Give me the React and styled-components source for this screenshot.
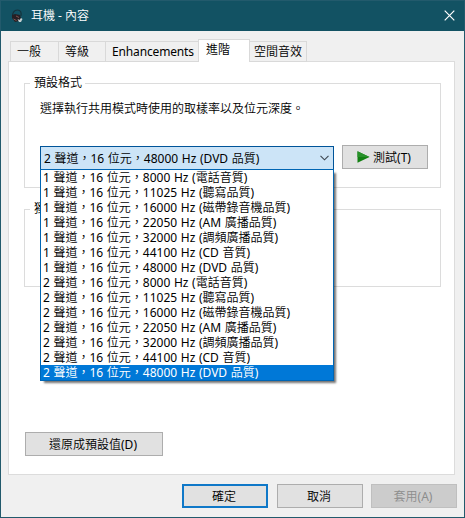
import React from "react";
import styled, { createGlobalStyle } from "styled-components";

const tabs = [
  { label: "一般", width: 48 },
  { label: "等級", width: 47 },
  { label: "Enhancements", width: 93, spacing: -0.15 },
  { label: "進階", width: 52, active: true },
  { label: "空間音效", width: 57 },
];

const formats = [
  "1 聲道，16 位元，8000 Hz (電話音質)",
  "1 聲道，16 位元，11025 Hz (聽寫品質)",
  "1 聲道，16 位元，16000 Hz (磁帶錄音機品質)",
  "1 聲道，16 位元，22050 Hz (AM 廣播品質)",
  "1 聲道，16 位元，32000 Hz (調頻廣播品質)",
  "1 聲道，16 位元，44100 Hz (CD 音質)",
  "1 聲道，16 位元，48000 Hz (DVD 品質)",
  "2 聲道，16 位元，8000 Hz (電話音質)",
  "2 聲道，16 位元，11025 Hz (聽寫品質)",
  "2 聲道，16 位元，16000 Hz (磁帶錄音機品質)",
  "2 聲道，16 位元，22050 Hz (AM 廣播品質)",
  "2 聲道，16 位元，32000 Hz (調頻廣播品質)",
  "2 聲道，16 位元，44100 Hz (CD 音質)",
  "2 聲道，16 位元，48000 Hz (DVD 品質)",
];

const selected = formats.length - 1;

const HeadphoneIcon = () => (
  <svg width="14" height="15" viewBox="0 0 14 15">
    <path d="M1.5 8C1 4.5 3 1 6.5 1S10.5 4 10 7" fill="none" stroke="#16333d" strokeWidth="1.2" />
    <path d="M1 6l3-1 5 1 1 3-2 3-4 1-3-4z" fill="#262024" />
    <path d="M2.5 10l3 1.5M5 7l3 1.5" stroke="#85504e" />
    <path d="M6.5 10l2 1 1.5-2 1.5 1-1.5 3H8z" fill="#c3ced0" />
  </svg>
);

const CloseIcon = () => (
  <svg width="11" height="11" viewBox="0 0 11 11">
    <path d="M0.7 0.7L10.3 10.3M10.3 0.7L0.7 10.3" stroke="#fff" strokeWidth="1.2" />
  </svg>
);

const ChevronIcon = () => (
  <svg width="9" height="6" viewBox="0 0 9 6">
    <path d="M0.5 0.8L4.5 4.8L8.5 0.8" fill="none" stroke="#3c4650" strokeWidth="1.1" />
  </svg>
);

const PlayIcon = () => (
  <svg width="13" height="12" viewBox="0 0 13 12">
    <path d="M0.5 0.3L12.5 6L0.5 11.8z" fill="#128012" />
    <path d="M0.5 0.3L12.5 6H0.5z" fill="#28912a" />
  </svg>
);

const App = () => {
  return (
    <>
      <GlobalStyle />
      <Dialog lang="zh-Hant">
        <TitleBar>
          <HeadphoneIcon />
          <h1>耳機 - 內容</h1>
          <CloseButton aria-label="關閉">
            <CloseIcon />
          </CloseButton>
        </TitleBar>
        <Content>
          <TabList>
            {tabs.map((tab) => (
              <Tab
                key={tab.label}
                $width={tab.width}
                $active={tab.active}
                $spacing={tab.spacing}
              >
                {tab.label}
              </Tab>
            ))}
          </TabList>
          <Panel>
            <Group $height={105}>
              <Legend>預設格式</Legend>
              <Description>選擇執行共用模式時使用的取樣率以及位元深度。</Description>
              <FormatRow>
                <Combo>
                  <ComboValue>
                    {formats[selected]}
                    <ChevronIcon />
                  </ComboValue>
                  <Options>
                    {formats.map((format, i) => (
                      <Option key={format} $selected={i === selected}>
                        {format}
                      </Option>
                    ))}
                  </Options>
                </Combo>
                <Button $width={86}>
                  <PlayIcon />
                  測試(T)
                </Button>
              </FormatRow>
            </Group>
            <Group $height={78}>
              <Legend>獨佔模式</Legend>
            </Group>
            <RestoreRow>
              <Button $width={138}>還原成預設值(D)</Button>
            </RestoreRow>
          </Panel>
          <Footer>
            <Button $width={86} $primary>
              確定
            </Button>
            <Button $width={86}>取消</Button>
            <Button $width={86} disabled>
              套用(A)
            </Button>
          </Footer>
        </Content>
      </Dialog>
    </>
  );
};

export default App;

const GlobalStyle = createGlobalStyle`
  * {
    box-sizing: border-box;
  }
  body {
    margin: 0;
    overflow: hidden;
    font-family: "Noto Sans", "Noto Sans CJK TC DemiLight", "Noto Sans CJK TC", sans-serif;
    font-size: 12px;
    color: #000;
  }
`;

const Dialog = styled.div`
  display: flex;
  flex-direction: column;
  width: 465px;
  height: 518px;
  border: 1px solid #225a6c;
  background: #f0f0f0;
`;

const TitleBar = styled.div`
  display: flex;
  align-items: center;
  height: 30px;
  padding: 0 9px 0 10px;
  background: #125263;

  h1 {
    flex: 1;
    margin: 0 0 0 6px;
    font-size: 12px;
    font-weight: 400;
    line-height: 16px;
    color: #fff;
  }
`;

const CloseButton = styled.button`
  display: flex;
  margin-top: -2px;
  padding: 0;
  border: 0;
  background: none;
`;

const Content = styled.div`
  display: flex;
  flex-direction: column;
  padding: 8px 7px 0;
`;

const TabList = styled.div`
  display: flex;
  align-items: flex-end;
  height: 23px;
  padding-left: 2px;
  margin-bottom: -1px;
`;

const Tab = styled.div`
  z-index: ${({ $active }) => ($active ? 1 : 0)};
  width: ${({ $width }) => $width}px;
  height: ${({ $active }) => ($active ? 23 : 21)}px;
  padding-left: ${({ $active }) => ($active ? 7 : 6)}px;
  border: 1px solid #d9d9d9;
  border-bottom: ${({ $active }) => ($active ? "0" : "1px solid #d9d9d9")};
  border-right-width: ${({ $active }) => ($active ? 1 : 0)}px;
  background: ${({ $active }) => ($active ? "#fff" : "#f0f0f0")};
  letter-spacing: ${({ $spacing }) => $spacing || 0}px;
  line-height: 20px;
  white-space: nowrap;

  &:last-child {
    padding-left: 4px;
    border-left: 0;
    border-right-width: 1px;
  }
`;

const Panel = styled.div`
  display: flex;
  flex-direction: column;
  height: 414px;
  width: 447px;
  padding: 21px 13px 0 15px;
  border: 1px solid #dcdcdc;
  background: #fff;
`;

const Group = styled.div`
  height: ${({ $height }) => $height}px;
  width: 417px;
  margin-bottom: 21px;
  padding-left: 15px;
  border: 1px solid #dcdcdc;
`;

const Legend = styled.div`
  width: fit-content;
  height: 16px;
  margin: -9px 0 0 -10px;
  padding: 0 3px 0 4px;
  background: #fff;
  line-height: 16px;
`;

const Description = styled.p`
  margin: 10px 0 0;
  line-height: 16px;
`;

const FormatRow = styled.div`
  display: flex;
  gap: 8px;
  margin-top: 28px;
`;

const Combo = styled.div`
  position: relative;
  width: 294px;
  margin-top: 1px;
`;

const ComboValue = styled.div`
  display: flex;
  align-items: center;
  justify-content: space-between;
  height: 24px;
  padding: 0 4px 1px 3px;
  border: 1px solid #005499;
  background: #cce4f7;
  word-spacing: 0.5px;
  white-space: nowrap;
`;

const Options = styled.div`
  position: absolute;
  top: 23px;
  left: 0;
  z-index: 2;
  width: 294px;
  border: 1px solid #0065b3;
  background: #fff;
  box-shadow: 3px 3px 2px -1px rgba(0, 0, 0, 0.55);
`;

const Option = styled.div`
  height: 15px;
  padding-left: 2px;
  background: ${({ $selected }) => ($selected ? "#0078d7" : "#fff")};
  color: ${({ $selected }) => ($selected ? "#fff" : "#000")};
  line-height: 15px;
  word-spacing: 0.5px;
  white-space: nowrap;
`;

const Button = styled.button`
  display: flex;
  align-items: center;
  justify-content: center;
  gap: 3px;
  width: ${({ $width }) => $width}px;
  height: 24px;
  padding: 0 2px 0 0;
  border: ${({ $primary }) => ($primary ? "2px solid #0f78c8" : "1px solid #adadad")};
  background: #e1e1e1;
  font: inherit;
  color: #000;

  &:disabled {
    border-color: #bfbfbf;
    background: #ccc;
    color: #8c8c8c;
  }
`;

const RestoreRow = styled.div`
  margin: 124px 0 0 1px;
`;

const Footer = styled.div`
  display: flex;
  justify-content: flex-end;
  gap: 8px;
  margin-top: 9px;

  button:first-child {
    margin-right: 1px;
  }
`;
